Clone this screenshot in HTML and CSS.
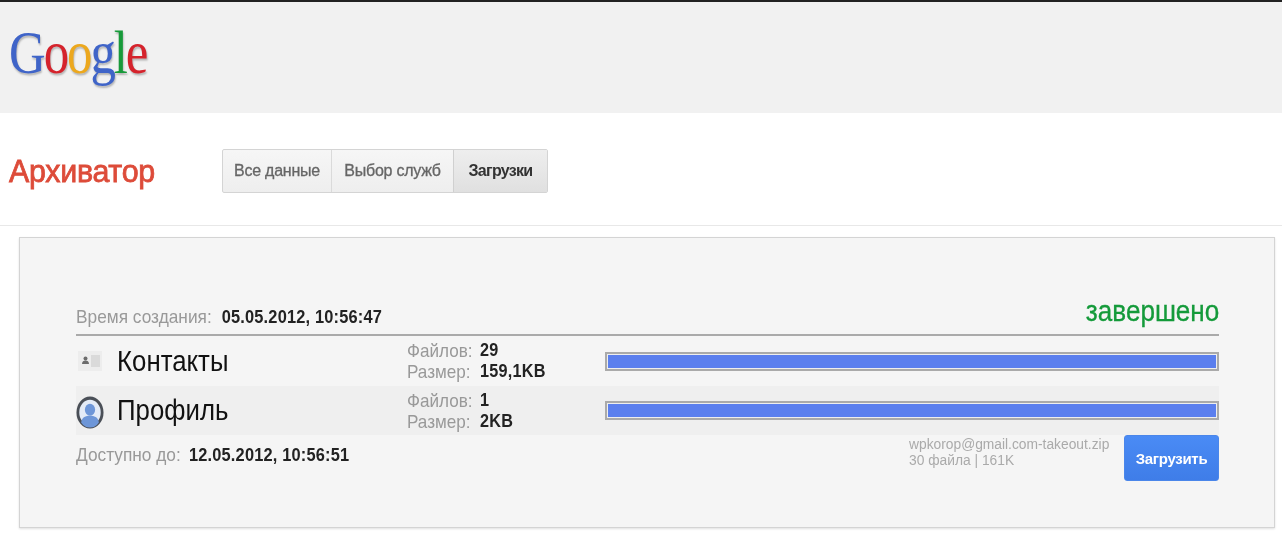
FILE: index.html
```html
<!DOCTYPE html>
<html lang="ru">
<head>
<meta charset="utf-8">
<title>Архиватор</title>
<link rel="stylesheet" href="styles.css">
</head>
<body>
<header class="top">
  <div class="logo"><span class="b">G</span><span class="r">o</span><span class="y">o</span><span class="b">g</span><span class="g">l</span><span class="r">e</span></div>
</header>
<section class="titlebar">
  <h1 class="title">Архиватор</h1>
  <nav class="tabs">
    <a class="tab t1">Все данные</a>
    <a class="tab t2">Выбор служб</a>
    <a class="tab t3 active">Загрузки</a>
  </nav>
</section>
<main class="card">
  <div class="head">
    <div class="meta"><span class="lbl">Время создания:</span><b class="val">05.05.2012, 10:56:47</b></div>
    <div class="status">завершено</div>
  </div>
  <div class="row">
    <div class="ico soft">
      <svg width="24" height="20" viewBox="0 0 24 20"><rect x="0" y="0" width="24" height="20" fill="#ececec"/><rect x="13" y="4" width="9" height="12" fill="#d6d6d6"/><circle cx="7.500" cy="7.500" r="2" fill="#555"/><path d="M4 13c0-2.500 1.500-3.500 3.500-3.500s3.500 1 3.500 3.500z" fill="#555"/></svg>
    </div>
    <div class="name"><span class="nm">Контакты</span></div>
    <div class="stats">
      <div class="sl"><span class="k">Файлов:</span><span class="v">29</span></div>
      <div class="sl"><span class="k">Размер:</span><span class="v">159,1KB</span></div>
    </div>
    <div class="bar"><div class="fill"></div></div>
  </div>
  <div class="row alt">
    <div class="ico shifted">
      <svg width="29" height="33" viewBox="0 0 30 30" preserveAspectRatio="none"><circle cx="15" cy="15" r="13" fill="#e3ebf7" stroke="#4a4f57" stroke-width="3"/><circle cx="15" cy="12.500" r="5.500" fill="#6d96d8"/><path d="M5.500 24c1-5 5-6 9.500-6s8.500 1 9.500 6a12 12 0 0 1-19 0z" fill="#6d96d8"/></svg>
    </div>
    <div class="name"><span class="nm">Профиль</span></div>
    <div class="stats">
      <div class="sl"><span class="k">Файлов:</span><span class="v">1</span></div>
      <div class="sl"><span class="k">Размер:</span><span class="v">2KB</span></div>
    </div>
    <div class="bar"><div class="fill"></div></div>
  </div>
  <div class="foot">
    <div class="meta avail"><span class="lbl">Доступно до:</span><b class="val">12.05.2012, 10:56:51</b></div>
    <div class="file">wpkorop@gmail.com-takeout.zip<br>30 файла | 161K</div>
    <a class="dl">Загрузить</a>
  </div>
</main>
</body>
</html>
```
FILE: styles.css
```css
* { box-sizing: border-box; }
html, body { margin: 0; height: 533px; overflow: hidden; }
body { background: #fff; font-family: "Liberation Sans", Arial, sans-serif; color: #222; }
.top { height: 113px; background: #f1f1f1; border-top: 2px solid #222; padding: 17px 0 0 9px; }
.logo { font-family: "Liberation Serif", serif; font-size: 62px; line-height: 66px; letter-spacing: -2.500px; text-shadow: 1px 2px 2px rgba(0,0,0,.25); transform: scaleX(.82); transform-origin: left center; filter: blur(.5px); }
.logo .b { color: #3f64c8; }
.logo .r { color: #d5232c; }
.logo .y { color: #eca81e; }
.logo .g { color: #189a3a; }
.titlebar { height: 113px; border-bottom: 1px solid #e8e8e8; display: flex; align-items: flex-start; padding: 36px 0 0 9px; filter: blur(.3px); }
.title { margin: 0; width: 213px; font-size: 32px; line-height: 44px; font-weight: 400; color: #dd4b39; letter-spacing: -.3px; -webkit-text-stroke: .8px #dd4b39; transform: scaleX(.95); transform-origin: left center; }
.tabs { display: flex; height: 44px; border: 1px solid #d4d4d4; border-radius: 2px; background: linear-gradient(#f6f6f6, #eeeeee); }
.tab { display: flex; align-items: center; justify-content: center; font-size: 16px; letter-spacing: -.25px; color: #666; font-weight: 400; -webkit-text-stroke: .3px #666; }
.t1 { width: 109px; border-right: 1px solid #dadada; }
.t2 { width: 121px; }
.t3 { width: 94px; border-left: 1px solid #d0d0d0; }
.tab.active { color: #333; background: linear-gradient(#eeeeee, #e0e0e0); font-weight: 700; -webkit-text-stroke: 0; font-size: 16px; letter-spacing: -.7px; }
.card { margin: 11px 7px 0 19px; height: 291px; background: #f5f5f5; border: 1px solid #d4d4d4; box-shadow: 0 1px 2px rgba(0,0,0,.12); padding: 58px 55px 0 56px; filter: blur(.3px); }
.head { display: flex; justify-content: space-between; align-items: flex-end; height: 40px; border-bottom: 2px solid #aaa; padding-bottom: 5px; }
.meta { font-size: 19px; line-height: 24px; transform: scaleX(.91); transform-origin: left center; }
.lbl { color: #999; margin-right: 11px; }
.avail .lbl { margin-right: 9px; }
.val { color: #222; font-size: 18px; letter-spacing: .2px; }
.status { font-size: 29px; line-height: 36px; color: #149a3a; -webkit-text-stroke: .3px #149a3a; transform: scaleX(.9); transform-origin: right center; }
.row { display: flex; align-items: center; height: 50px; }
.row.alt { background: #efefef; height: 49px; }
.ico { width: 41px; display: flex; justify-content: center; padding-right: 13px; }
.soft { filter: blur(.5px); opacity: .85; }
.shifted { padding-top: 3px; }
.name { width: 290px; font-size: 29px; color: #111; }
.nm { display: inline-block; transform: scaleX(.89); transform-origin: left center; }
.stats { width: 198px; font-size: 19px; line-height: 21px; transform: scaleX(.9); transform-origin: left center; }
.sl { display: flex; }
.k { width: 81px; color: #999; }
.v { color: #222; font-weight: 700; font-size: 18px; letter-spacing: .3px; }
.bar { flex: 1; height: 19px; border: 2px solid #aaa; padding: 1px; background: #eee; }
.fill { height: 100%; background: #5b7fee; }
.foot { display: flex; align-items: flex-start; }
.avail { flex: 1; padding-top: 8px; }
.file { width: 215px; padding-top: 2px; font-size: 13.800px; line-height: 16px; color: #aaa; }
.dl { width: 95px; height: 46px; display: flex; align-items: center; justify-content: center; background: linear-gradient(#4a8bf5, #3f7de8); border: 1px solid #4a86ea; border-radius: 3px; color: #fff; font-weight: 700; font-size: 15px; letter-spacing: -.3px; }
```
